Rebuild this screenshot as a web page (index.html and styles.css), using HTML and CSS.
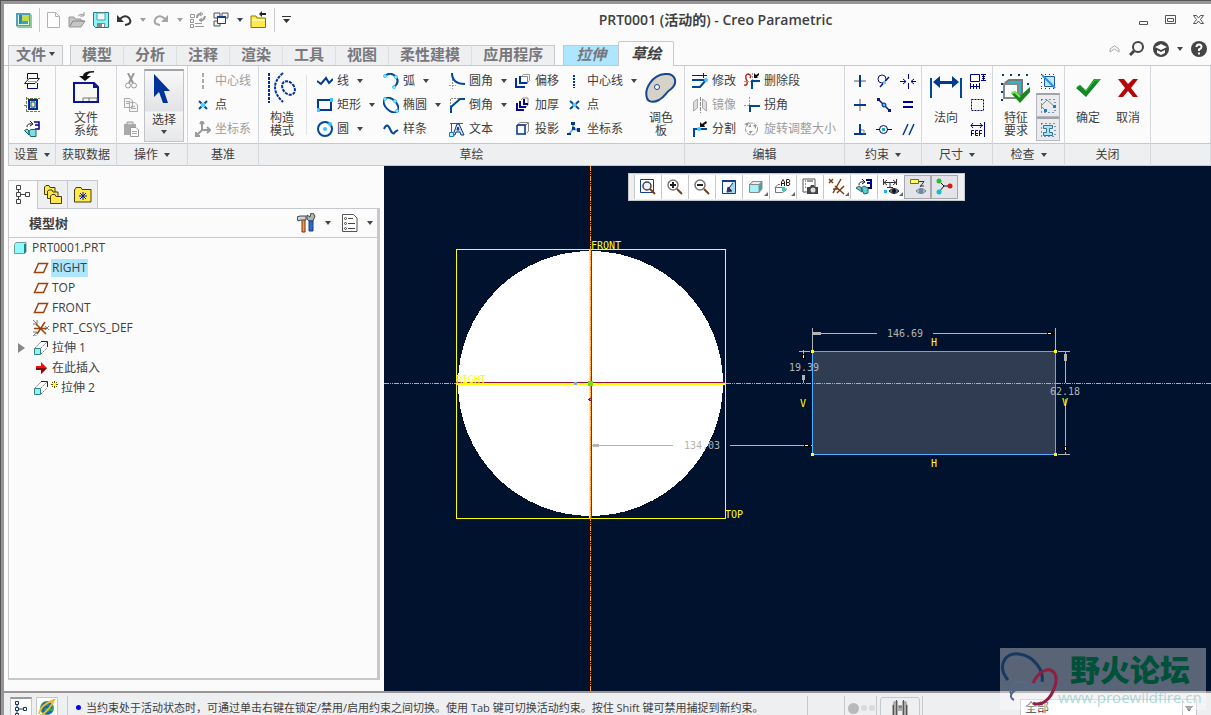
FILE: index.html
```html
<!DOCTYPE html>
<html lang="zh-CN">
<head>
  <meta charset="UTF-8">
  <meta name="viewport" content="width=device-width, initial-scale=1.0">
  <title>PRT0001 (活动的) - Creo Parametric</title>
  <link rel="stylesheet" href="styles.css">
</head>
<body>
<div class="window">

  <!-- Title bar -->
  <header class="titlebar">
    <div class="quick">
      <button class="qbtn" aria-label="Creo"><svg width="16" height="16" viewBox="0 0 16 16"><path d="M0 1H14L16 3V16H2L0 14Z" fill="#8cc8a0"/><path d="M0 1H14V14H0Z" fill="#4d9fc4"/><path d="M2 3H13V13H2Z" fill="#e8f4d0"/><path d="M3 3H8V12H3Z" fill="#2784bd"/><path d="M6 3H13V9H6Z" fill="#c3d94e"/><path d="M5 9H12V12H5Z" fill="#30a6ce"/></svg></button>
      <span class="qsep"></span>
      <button class="qbtn" aria-label="新建"><svg width="14" height="16" viewBox="0 0 14 16"><path d="M.5 .5H8.500L12.500 4.500V15.500H.5ZM8.500 .5V4.500H12.500" fill="#fff" stroke="#b2b2b2"/></svg></button>
      <button class="qbtn" aria-label="打开"><svg width="18" height="16" viewBox="0 0 18 16"><path d="M1 14V5H6L7 7H13V9H17L13 15H1Z" fill="#c5c5c5" stroke="#999"/><path d="M2 14L5 9H17" fill="none" stroke="#888"/><path d="M10 4Q12 1 16 3M16 0V4H12" fill="none" stroke="#999"/></svg></button>
      <button class="qbtn" aria-label="保存"><svg width="16" height="16" viewBox="0 0 16 16"><path d="M.5 .5H15.500V15.500H2.500L.5 13.500Z" fill="#8df4f4" stroke="#237b88"/><path d="M4 1H12V8H4Z" fill="#f5f5f5" stroke="#4aa3aa"/><path d="M4 11H12V15H4Z" fill="#888"/><path d="M9 12H11V15H9Z" fill="#fff"/></svg></button>
      <button class="qbtn" aria-label="撤消"><svg width="16" height="16" viewBox="0 0 16 16"><path d="M4 7Q9 2 13 6Q17 12 9 13" fill="none" stroke="#333" stroke-width="2"/><path d="M1 3V10H8Z" fill="#333"/></svg><i class="arrow dim"></i></button>
      <button class="qbtn" aria-label="重做"><svg width="16" height="16" viewBox="0 0 16 16"><path d="M12 7Q7 2 3 6Q-1 12 7 13" fill="none" stroke="#a5a5a5" stroke-width="2"/><path d="M15 3V10H8Z" fill="#a5a5a5"/></svg><i class="arrow dim"></i></button>
      <button class="qbtn" aria-label="重新生成"><svg width="16" height="16" viewBox="0 0 16 16" fill="none" stroke="#999"><path d="M.5 2.500H4.500V5.500H.5ZM.5 7.500H3.500V10.500H.5ZM.5 12.500H3.500V15.500H.5ZM5 14.500H14M5 11.500H12"/><path d="M7 6Q7 2 11 2M15 4Q14 9 10 8" stroke-width="2"/><path d="M10 0L13 2L10 4M12 6L9 8L12 10"/></svg></button>
      <button class="qbtn" aria-label="窗口"><svg width="16" height="16" viewBox="0 0 16 16"><path d="M1 1H7V6H1ZM9 1H15V6H9ZM1 9H7V14H1Z" fill="#eee" stroke="#555"/><path d="M4.500 4.500H12.500V11.500H4.500Z" fill="#fff" stroke="#123e91"/><path d="M4 4H13V6H4Z" fill="#123e91"/></svg><i class="arrow"></i></button>
      <button class="qbtn" aria-label="关闭"><svg width="17" height="18" viewBox="0 0 17 18"><path d="M1 5H6L7 7H15.500V16.500H1Z" fill="#ffea4d" stroke="#8b7700"/><path d="M2 8H15V10H2Z" fill="#fff9a3"/><path d="M9 3L12 0V2H16V4H12V6Z" fill="#222"/></svg></button>
      <span class="qsep"></span>
      <button class="qbtn" aria-label="自定义"><svg width="10" height="8" viewBox="0 0 10 8"><path d="M0 0H9V1H0ZM1 3H8L4.500 7Z" fill="#333"/></svg></button>
    </div>
    <h1 class="title">PRT0001 (活动的) - Creo Parametric</h1>
    <div class="winbtns">
      <button aria-label="最小化"><svg width="10" height="10" viewBox="0 0 10 10"><path d="M.5 6.500H8.500V9.500H.5Z" fill="none" stroke="#555"/></svg></button>
      <button aria-label="最大化"><svg width="12" height="10" viewBox="0 0 12 10"><path d="M.5 .5H10.500V8.500H.5ZM2.500 3.500H8.500V6.500H2.500Z" fill="none" stroke="#555"/></svg></button>
      <button aria-label="关闭窗口"><svg width="12" height="10" viewBox="0 0 12 10"><path d="M.5 .5H3.500L5.500 3L7.500 .5H10.500L7.500 4.500L10.500 8.500H7.500L5.500 6L3.500 8.500H.5L3.500 4.500Z" fill="none" stroke="#555"/></svg></button>
    </div>
  </header>

  <!-- Ribbon tabs -->
  <nav class="tabs">
    <button class="tab file">文件<i class="arrow"></i></button>
    <div class="tabset">
      <button class="tab">模型</button><button class="tab">分析</button><button class="tab">注释</button><button class="tab">渲染</button><button class="tab">工具</button><button class="tab">视图</button><button class="tab">柔性建模</button><button class="tab">应用程序</button>
    </div>
    <button class="tab context">拉伸</button>
    <button class="tab context active">草绘</button>
    <div class="help">
      <button aria-label="最小化功能区"><svg width="12" height="8" viewBox="0 0 12 8"><path d="M1 4L5.500 .7L10 4V7L5.500 4L1 7Z" fill="none" stroke="#aaa"/></svg></button>
      <button aria-label="搜索"><svg width="16" height="16" viewBox="0 0 16 16"><circle cx="9" cy="6" r="5" fill="#f4f8fc" stroke="#444" stroke-width="2"/><path d="M5 10L1 14" stroke="#444" stroke-width="3"/></svg></button>
      <button aria-label="学习"><svg width="16" height="16" viewBox="0 0 16 16"><circle cx="8" cy="8" r="8" fill="#444"/><path d="M2 6L8 3L14 6L8 9ZM4 9L8 11L12 9V12L8 14L4 12Z" fill="#fff"/></svg><i class="arrow"></i></button>
      <button aria-label="帮助"><svg width="16" height="16" viewBox="0 0 16 16"><circle cx="8" cy="8" r="8" fill="#444"/><path d="M5.500 6Q5.500 3.500 8 3.500T10.500 6Q10.500 7.500 8 8.500V10" fill="none" stroke="#fff" stroke-width="2"/><path d="M7 11.500H9V13.500H7Z" fill="#fff"/></svg></button>
    </div>
  </nav>

  <!-- Ribbon groups -->
  <div class="ribbon">
    <section class="group g-setup">
      <div class="tools">
        <div class="col">
          <button class="cmd" aria-label="草绘设置"><svg width="16" height="16" viewBox="0 0 16 16"><path d="M3.500 6V.5H13.500V6M13.500 10V15.500H3.500V10" fill="none" stroke="#00008b"/><path d="M.5 10.500L5 5.500H15.500L11 10.500Z" fill="#fff" stroke="#222"/><path d="M4 8.500H13" stroke="#aaa"/></svg></button>
          <button class="cmd" aria-label="参考"><svg width="16" height="16" viewBox="0 0 16 16"><path d="M4 2H14V13H4Z" fill="#003093"/><path d="M6 4H12V11H6Z" fill="#c6d3d0"/><path d="M7 5H11V10H7Z" fill="#dde9ca" stroke="#456"/><path d="M0 8.500H4M2.500 0V15M2 14.500H16M2 1.500H16" stroke="#777c45" stroke-dasharray="3 1"/></svg></button>
          <button class="cmd" aria-label="草绘视图"><svg width="16" height="16" viewBox="0 0 16 16"><path d="M10 1H15V8H11M11 4H15" fill="none" stroke="#00008b" stroke-width="1.500"/><path d="M3 6Q3 2 8 3M6 0L9 3L6 5" fill="none" stroke="#222"/><path d="M.5 9.500L3 8L5 10V14ZM4.500 10.500L7 8.500H12V15.500H6.500Z" fill="#7fe0dd" stroke="#176670"/></svg></button>
        </div>
      </div>
      <div class="glabel">设置 <i class="arrow"></i></div>
    </section>

    <section class="group g-data">
      <div class="tools center">
        <button class="big"><svg width="30" height="34" viewBox="0 0 30 34"><path d="M3 14H23L27 18V33H3Z" fill="#f7f7f4" stroke="#0a1595" stroke-width="2"/><path d="M23 14V18H27" fill="none" stroke="#0a1595" stroke-width="2"/><path d="M12 32V29H26V32M18 29V32" fill="none" stroke="#777"/><path d="M23 3.500Q17 3 16 7H20L14 12L8 7H12Q12 2 23 2Z" fill="#111"/></svg><span>文件<br>系统</span></button>
      </div>
      <div class="glabel">获取数据</div>
    </section>

    <section class="group g-ops">
      <div class="tools">
        <div class="col">
          <button class="cmd" aria-label="剪切"><svg width="16" height="16" viewBox="0 0 16 16" fill="none" stroke="#999"><path d="M5 0L10 10M11 0L6 10" stroke-width="2"/><circle cx="5" cy="12.500" r="2.500"/><circle cx="11" cy="12.500" r="2.500"/></svg></button>
          <button class="cmd" aria-label="复制"><svg width="16" height="16" viewBox="0 0 16 16" fill="#f6f6f6" stroke="#aaa"><path d="M1.500 1.500H7L9.500 4V10.500H1.500ZM6.500 5.500H12L14.500 8V14.500H6.500Z"/><path d="M3 4.500H7M3 6.500H6M8 9.500H12M8 11.500H13"/></svg></button>
          <button class="cmd" aria-label="粘贴"><svg width="16" height="16" viewBox="0 0 16 16"><path d="M1 3H13V14H1Z" fill="#aaa"/><path d="M4 1H10V4H4Z" fill="#ddd" stroke="#999"/><path d="M7.500 6.500H13L15.500 9V15.500H7.500Z" fill="#fff" stroke="#999"/><path d="M9 10.500H14M9 12.500H14" stroke="#aaa"/></svg></button>
        </div>
        <button class="big select-tool"><svg width="22" height="34" viewBox="0 0 22 34"><path d="M1 3V26L6 21L10 32H15L11 20H17Z" fill="#003399"/></svg><span>选择</span><i class="arrow"></i></button>
      </div>
      <div class="glabel">操作 <i class="arrow"></i></div>
    </section>

    <section class="group g-datum">
      <div class="tools">
        <div class="col">
          <button class="cmd off"><svg width="16" height="16" viewBox="0 0 16 16"><path d="M8 0V16" stroke="#aaa" stroke-width="2" stroke-dasharray="4 2"/></svg>中心线</button>
          <button class="cmd"><svg width="16" height="16" viewBox="0 0 16 16"><path d="M4 4L12 12M12 4L4 12" stroke="#084b91" stroke-width="2"/><path d="M6 6H10V10H6Z" fill="#4ecdff"/></svg>点</button>
          <button class="cmd off"><svg width="16" height="16" viewBox="0 0 16 16"><path d="M7 2V9L2 14M7 9H15M5 3L7 0L9 3M1 11V15H5M12 6L15 9L12 12" fill="none" stroke="#999" stroke-width="2"/></svg>坐标系</button>
        </div>
      </div>
      <div class="glabel">基准</div>
    </section>

    <section class="group g-sketch">
      <div class="tools">
        <button class="big construct"><svg width="28" height="34" viewBox="0 0 28 34"><g fill="none" stroke="#003399" stroke-width="2" stroke-dasharray="3 1"><path d="M1 4V34M15 4Q-1 18 15 33"/><ellipse cx="20.500" cy="19" rx="5.500" ry="7.500" transform="rotate(-40 20.500 19)"/></g></svg><span>构造<br>模式</span></button>
        <span class="vline"></span>
        <div class="col c1">
          <button class="cmd"><svg width="16" height="16" viewBox="0 0 16 16"><path d="M0 8L4 11L9 5L12 10L16 6" fill="none" stroke="#003b91" stroke-width="2"/></svg>线<i class="arrow"></i></button>
          <button class="cmd"><svg width="16" height="16" viewBox="0 0 16 16"><path d="M1 3H14V13H1Z" fill="none" stroke="#003b91" stroke-width="2"/><path d="M13 1H16V5H13ZM0 11H3V15H0Z" fill="#39c5ff"/></svg>矩形<i class="arrow"></i></button>
          <button class="cmd"><svg width="16" height="16" viewBox="0 0 16 16"><circle cx="8" cy="8" r="7" fill="none" stroke="#00489c" stroke-width="2"/><circle cx="8" cy="8" r="2" fill="#39c5ff"/><circle cx="13" cy="3" r="2" fill="#39c5ff"/></svg>圆<i class="arrow"></i></button>
        </div>
        <div class="col c1">
          <button class="cmd"><svg width="16" height="16" viewBox="0 0 16 16"><path d="M2 3Q8 -2 13 4Q17 9 11 14" fill="none" stroke="#00489c" stroke-width="2"/><g fill="#a6eaff" stroke="#39c5ff"><circle cx="2" cy="3" r="1.500"/><circle cx="13" cy="4" r="1.500"/><circle cx="11" cy="14" r="1.500"/></g></svg>弧<i class="arrow"></i></button>
          <button class="cmd"><svg width="16" height="16" viewBox="0 0 16 16"><ellipse cx="8" cy="8" rx="9" ry="5.500" transform="rotate(45 8 8)" fill="none" stroke="#00489c" stroke-width="2"/><g fill="#a6eaff" stroke="#39c5ff"><circle cx="2" cy="2" r="1.500"/><circle cx="12" cy="4" r="1.500"/><circle cx="14" cy="14" r="1.500"/></g></svg>椭圆<i class="arrow"></i></button>
          <button class="cmd"><svg width="16" height="16" viewBox="0 0 16 16"><path d="M1 8Q4 1 7 8T12 11L15 9" fill="none" stroke="#00489c" stroke-width="2"/></svg>样条</button>
        </div>
        <div class="col c1">
          <button class="cmd"><svg width="16" height="16" viewBox="0 0 16 16"><path d="M3.500 6V16M0 12.500H7" stroke="#999" stroke-dasharray="2 1"/><path d="M3 0Q3 11 16 11" fill="none" stroke="#00489c" stroke-width="2"/></svg>圆角<i class="arrow"></i></button>
          <button class="cmd"><svg width="16" height="16" viewBox="0 0 16 16"><path d="M1.500 10V1.500H10" fill="none" stroke="#888" stroke-dasharray="2 1"/><path d="M2 16V10L11 2H16" fill="none" stroke="#00489c" stroke-width="2"/></svg>倒角<i class="arrow"></i></button>
          <button class="cmd"><svg width="16" height="16" viewBox="0 0 16 16"><path d="M2.500 13V2.500H14M1 2.500H4" fill="none" stroke="#555"/><path d="M4 14L8 3H10L15 14H12L11 11H7L6 14ZM8 9H10L9 6Z" fill="#ddd" stroke="#003b91"/><path d="M.5 11.500H4.500V15.500H.5Z" fill="#bcecff" stroke="#1e75bc"/></svg>文本</button>
        </div>
        <div class="col c2">
          <button class="cmd"><svg width="16" height="16" viewBox="0 0 16 16"><path d="M6.500 3.500L8.500 1.500H14.500V7.500L12.500 9.500" fill="none" stroke="#999"/><path d="M5.500 3.500H12.500V10.500H5.500Z" fill="#fff" stroke="#888"/><path d="M1 5V14H10M5 3V10H12" fill="none" stroke="#003399" stroke-width="2"/></svg>偏移</button>
          <button class="cmd"><svg width="16" height="16" viewBox="0 0 16 16"><path d="M6 3L8 1H13V8L11 10" fill="none" stroke="#888"/><path d="M2 6V13H9M5 4V10H11M9 2V7H13" fill="none" stroke="#0a058d" stroke-width="2"/></svg>加厚</button>
          <button class="cmd"><svg width="16" height="16" viewBox="0 0 16 16"><path d="M3 3L5 1.500H13.500V10L12 12M3 4H11M11 4L13 2" fill="none" stroke="#888"/><path d="M2 4V13H11M2 4H10V13" fill="none" stroke="#003399" stroke-width="1.500"/></svg>投影</button>
        </div>
        <div class="col c3">
          <button class="cmd"><svg width="16" height="16" viewBox="0 0 16 16"><path d="M7 2V15" stroke="#003b91" stroke-width="2" stroke-dasharray="2 1"/></svg>中心线<i class="arrow"></i></button>
          <button class="cmd"><svg width="16" height="16" viewBox="0 0 16 16"><path d="M3 4L12 12M12 4L3 12" stroke="#084b91" stroke-width="2"/><path d="M6 6H9V10H6Z" fill="#4ecdff"/></svg>点</button>
          <button class="cmd"><svg width="16" height="16" viewBox="0 0 16 16"><path d="M6 2V8L2 13M6 8L13 9" fill="none" stroke="#69a9d6" stroke-width="2"/><path d="M4 1H8V4H4ZM0 12H4V14H0ZM5 6H8V9H5ZM10 7H13V11H10Z" fill="#003b91"/></svg>坐标系</button>
        </div>
        <button class="big palette"><svg width="32" height="34" viewBox="0 0 32 34"><path d="M2 29C-1 20 7 6 20 5C31 4 33 14 26 20C20 24 21 27 14 31C8 34 3 33 2 29Z" fill="#d5d3c8" stroke="#164592" stroke-width="2"/><circle cx="12" cy="18" r="2.500" fill="#fff" stroke="#164592"/></svg><span>调色<br>板</span></button>
      </div>
      <div class="glabel">草绘</div>
    </section>

    <section class="group g-edit">
      <div class="tools">
        <div class="col e1">
          <button class="cmd"><svg width="16" height="16" viewBox="0 0 16 16"><path d="M0 2.500H15M11.500 0V5" stroke="#222"/><path d="M0 7H11L14 7M0 14H8L14 7" fill="none" stroke="#00489c" stroke-width="2"/><circle cx="14" cy="7" r="2" fill="#39c5ff"/></svg>修改</button>
          <button class="cmd off"><svg width="16" height="16" viewBox="0 0 16 16"><path d="M1.500 14V5L5.500 2V11ZM14.500 14V5L10.500 2V11Z" fill="#ddd" stroke="#aaa"/><path d="M8.500 0V16" stroke="#888" stroke-dasharray="4 1"/></svg>镜像</button>
          <button class="cmd"><svg width="16" height="16" viewBox="0 0 16 16"><path d="M2 16V8H15" fill="none" stroke="#00489c" stroke-width="2"/><circle cx="7" cy="8" r="2" fill="#39c5ff"/><path d="M8 6V1L10 3L14 0L15 2L12 4L13 6Z" fill="#111"/></svg>分割</button>
        </div>
        <div class="col">
          <button class="cmd"><svg width="16" height="16" viewBox="0 0 16 16"><path d="M0 12Q4 13 3 8Q0 2 4 1Q8 2 6 5" fill="none" stroke="#aa3022" stroke-width="1.500"/><path d="M8 16V8H16" fill="none" stroke="#00489c" stroke-width="2"/><path d="M10 5V0L12 2L15 0V2L13 4L14 5Z" fill="#111"/><path d="M0 8.500H7M8.500 0V7" stroke="#999" stroke-dasharray="2 1"/></svg>删除段</button>
          <button class="cmd"><svg width="16" height="16" viewBox="0 0 16 16"><path d="M0 8.500H7M5.500 0V8" stroke="#999" stroke-dasharray="2 1"/><path d="M6 15V9H16" fill="none" stroke="#00489c" stroke-width="2"/></svg>拐角</button>
          <button class="cmd off"><svg width="16" height="16" viewBox="0 0 16 16"><circle cx="7.500" cy="8" r="6" fill="none" stroke="#999" stroke-dasharray="4 1"/><path d="M4 6H7V3ZM9 4H12V8ZM5 10H9L6 13Z" fill="#999"/><path d="M0 3L5 1L4 5" fill="#999"/></svg>旋转调整大小</button>
        </div>
      </div>
      <div class="glabel">编辑</div>
    </section>

    <section class="group g-constrain">
      <div class="tools grid3">
        <button class="cmd" aria-label="竖直"><svg width="16" height="16" viewBox="0 0 16 16"><path d="M2 8H14" stroke="#aaa" stroke-width="2"/><path d="M8 2V14" stroke="#003b91" stroke-width="2"/></svg></button>
        <button class="cmd" aria-label="相切"><svg width="16" height="16" viewBox="0 0 16 16"><circle cx="6" cy="6" r="4" fill="none" stroke="#0a168d"/><path d="M4 14L13 4" stroke="#0a168d" stroke-width="1.500"/><path d="M7 8H10V11H7Z" fill="#38e3f0"/></svg></button>
        <button class="cmd" aria-label="对称"><svg width="16" height="16" viewBox="0 0 16 16"><path d="M8.500 1V6M8.500 10V16M0 8.500H6M11 8.500H16M3 6L6 8.500L3 11M14 6L11 8.500L14 11" fill="none" stroke="#00008b"/></svg></button>
        <button class="cmd" aria-label="水平"><svg width="16" height="16" viewBox="0 0 16 16"><path d="M8 2V14" stroke="#aaa" stroke-width="2"/><path d="M2 8H14" stroke="#003b91" stroke-width="2"/></svg></button>
        <button class="cmd" aria-label="中点"><svg width="16" height="16" viewBox="0 0 16 16"><path d="M2 2L14 14" stroke="#0a168d" stroke-width="1.500"/><path d="M1 1H4V4H1ZM12 12H15V15H12Z" fill="#0a168d"/><circle cx="8" cy="8" r="2" fill="#37cff0" stroke="#0a168d"/></svg></button>
        <button class="cmd" aria-label="相等"><svg width="16" height="16" viewBox="0 0 16 16"><path d="M3 5H13M3 10H13" stroke="#00008b" stroke-width="2"/></svg></button>
        <button class="cmd" aria-label="垂直"><svg width="16" height="16" viewBox="0 0 16 16"><path d="M8 3V13M2 13H14" stroke="#003b91" stroke-width="2"/><path d="M9 9H12V13" fill="none" stroke="#888"/></svg></button>
        <button class="cmd" aria-label="重合"><svg width="16" height="16" viewBox="0 0 16 16"><path d="M0 8.500H4M11 8.500H16" stroke="#00008b"/><circle cx="7.500" cy="8.500" r="4" fill="none" stroke="#00008b"/><path d="M6 7H9V10H6Z" fill="#1eaab0"/></svg></button>
        <button class="cmd" aria-label="平行"><svg width="16" height="16" viewBox="0 0 16 16"><path d="M3 14L8 3M9 14L14 3" stroke="#003b91" stroke-width="1.500"/></svg></button>
      </div>
      <div class="glabel">约束 <i class="arrow"></i></div>
    </section>

    <section class="group g-dim">
      <div class="tools">
        <button class="big"><svg width="32" height="34" viewBox="0 0 32 34"><path d="M1 9V29M31 9V29" stroke="#00489c" stroke-width="2"/><path d="M3 13L10 7V12H22V7L29 13L22 19V15H10V19Z" fill="#003b91"/></svg><span>法向</span></button>
        <div class="col">
          <button class="cmd" aria-label="周长"><svg width="16" height="16" viewBox="0 0 16 16"><path d="M.5 1.500H9.500V8.500H.5ZM11 1.500H16M11 7.500H16M13.500 1V8M12 3.500H15M12 5.500H15M.5 10V16M9.500 10V16M1 13.500H9M3.500 11V16M6.500 11V16" fill="none" stroke="#00008b"/></svg></button>
          <button class="cmd" aria-label="基线"><svg width="16" height="16" viewBox="0 0 16 16"><path d="M1.500 2.500H13.500V13.500H1.500Z" fill="none" stroke="#00008b" stroke-dasharray="2 1"/></svg></button>
          <button class="cmd" aria-label="参考尺寸"><svg width="16" height="16" viewBox="0 0 16 16"><path d="M14.500 1V16M1 4.500H13M3 2L1 4.500L3 7M10 2L12 4.500L10 7M1.500 15V9.500H4M1 12.500H4M8 9.500H5.500V14.500H8M5 12.500H8M9.500 15V9.500H12M9 12.500H12" fill="none" stroke="#00008b"/></svg></button>
        </div>
      </div>
      <div class="glabel">尺寸 <i class="arrow"></i></div>
    </section>

    <section class="group g-inspect">
      <div class="tools">
        <button class="big"><svg width="30" height="34" viewBox="0 0 30 34"><path d="M1 6H29M1 14V32M27 14V18" fill="none" stroke="#003b91" stroke-width="2" stroke-dasharray="2 6"/><path d="M4 14L8 11H21V24L17 29" fill="#30b9be" stroke="#777" stroke-width="2"/><path d="M3 15H17V29H3Z" fill="#fafcfc" stroke="#888" stroke-width="2"/><path d="M10 24L14 22L19 27L29 18V23L19 34Z" fill="#16881d"/><path d="M11 24L14 23L19 28" fill="none" stroke="#7be850" stroke-width="2"/></svg><span>特征<br>要求</span></button>
        <div class="col toggles">
          <button class="cmd" aria-label="重叠几何"><svg width="16" height="16" viewBox="0 0 16 16"><path d="M4.500 3.500H14.500V13.500H4.500Z" fill="#bce7f8" stroke="#245aa4"/><path d="M1 1.500H15M1.500 1V15M1 15.500H15" fill="none" stroke="#003b91" stroke-dasharray="1 3"/><path d="M2 2L15 15" stroke="#278de8" stroke-width="2"/></svg></button>
          <button class="cmd on" aria-label="突出显示开放端"><svg width="16" height="16" viewBox="0 0 16 16"><path d="M1.500 1.500H15V14.500H1.500Z" fill="none" stroke="#003b91" stroke-dasharray="1 3"/><path d="M5 12L1 8L7 2L14 8" fill="none" stroke="#888"/><path d="M4 11H7V14H4ZM13 7H16V10H13Z" fill="#1b7ad2"/></svg></button>
          <button class="cmd on" aria-label="着色封闭环"><svg width="16" height="16" viewBox="0 0 16 16"><path d="M1.500 1.500H15V14.500H1.500Z" fill="none" stroke="#003b91" stroke-dasharray="1 3"/><path d="M3.500 3.500H12.500V6.500H9.500V10.500H12.500V13.500H3.500V10.500H6.500V6.500H3.500Z" fill="#a9e5f6" stroke="#307395"/></svg></button>
        </div>
      </div>
      <div class="glabel">检查 <i class="arrow"></i></div>
    </section>

    <section class="group g-close">
      <div class="tools center">
        <button class="big"><svg width="26" height="34" viewBox="0 0 26 34"><path d="M1 19L5 16L11 21L19 10H26L11 28Z" fill="#128724"/><path d="M2 18L5 16L11 22L20 11H25" fill="none" stroke="#36cf36"/></svg><span>确定</span></button>
        <button class="big"><svg width="24" height="34" viewBox="0 0 24 34"><path d="M2 10H8L12 15L17 10H22L15 19L22 28H17L12 22L7 28H2L9 19Z" fill="#b40808"/></svg><span>取消</span></button>
      </div>
      <div class="glabel">关闭</div>
    </section>
    <section class="group g-rest">
      <div class="tools"></div>
      <div class="glabel"></div>
    </section>
  </div>

  <main class="main">
    <!-- Model tree -->
    <aside class="side">
      <div class="sidetabs">
        <button class="sidetab active" aria-label="模型树"><svg width="16" height="20" viewBox="0 0 16 20"><path d="M1.500 .5H5.500V4.500H1.500ZM1.500 7.500H5.500V11.500H1.500ZM1.500 14.500H5.500V18.500H1.500ZM10.500 7.500H14.500V11.500H10.500ZM3.500 5V7M3.500 12V14M6 9.500H10" fill="none" stroke="#444"/></svg></button>
        <button class="sidetab" aria-label="文件夹浏览器"><svg width="18" height="20" viewBox="0 0 18 20" fill="#ffe84b" stroke="#443f17"><path d="M.5 9.500V2L2 .5H5L6 2.500H11V9.500Z"/><path d="M3.500 13.500V6L5 5H8L9 7H14V13.500Z"/><path d="M6.500 18.500V11L8 9.500H11L12 11.500H17.500V18.500Z"/></svg></button>
        <button class="sidetab" aria-label="收藏夹"><svg width="18" height="16" viewBox="0 0 18 16"><path d="M.5 15V3L2 .5H7L8 2.500H17V15Z" fill="#ffe94b" stroke="#443f17"/><path d="M9 5V13M5 9H13M6 6L12 12M12 6L6 12" stroke="#0018a5"/></svg></button>
      </div>
      <div class="panel">
        <div class="panelhead">
          <h2>模型树</h2>
          <button aria-label="设置"><svg width="19" height="20" viewBox="0 0 19 20"><path d="M5 6H8V19H5Z" fill="#e3a33b" stroke="#8a2a15"/><path d="M0 4L3 3H9V7H4L1 8Z" fill="#c8d4d6" stroke="#444"/><path d="M10 2L13 4L14 0H16L18 3L16 8H12L10 6Z" fill="#aab5b7" stroke="#444"/><path d="M12 8H16V18H12Z" fill="#276bd0" stroke="#223c73"/></svg><i class="arrow"></i></button>
          <button aria-label="显示"><svg width="17" height="20" viewBox="0 0 17 20"><path d="M1.500 1.500H12.500L16 5V18.500H1.500Z" fill="#fff" stroke="#555"/><path d="M7 5.500H12M7 10.500H14M7 15.500H14" stroke="#444"/><g fill="none" stroke="#444"><circle cx="4.500" cy="5.500" r="1"/><circle cx="4.500" cy="10.500" r="1"/><circle cx="4.500" cy="15.500" r="1"/></g></svg><i class="arrow"></i></button>
        </div>
        <ul class="tree">
          <li><svg width="16" height="16" viewBox="0 0 16 16"><path d="M1.500 4.500L3 2.500H13V12L10.500 13.500H1.500Z" fill="#8efaff" stroke="#6e9d9e"/><path d="M11 4H13V12L11 14Z" fill="#247f80"/></svg><span>PRT0001.PRT</span></li>
          <li class="sub"><svg width="16" height="16" viewBox="0 0 16 16"><path d="M1.500 12.500L5.500 3.500H14.500L10.500 12.500Z" fill="none" stroke="#99420c" stroke-width="1.500"/></svg><span class="sel">RIGHT</span></li>
          <li class="sub"><svg width="16" height="16" viewBox="0 0 16 16"><path d="M1.500 12.500L5.500 3.500H14.500L10.500 12.500Z" fill="none" stroke="#99420c" stroke-width="1.500"/></svg><span>TOP</span></li>
          <li class="sub"><svg width="16" height="16" viewBox="0 0 16 16"><path d="M1.500 12.500L5.500 3.500H14.500L10.500 12.500Z" fill="none" stroke="#99420c" stroke-width="1.500"/></svg><span>FRONT</span></li>
          <li class="sub"><svg width="16" height="16" viewBox="0 0 16 16"><path d="M1 8.500H14M3 4L13 14M12 2L4 14" fill="none" stroke="#99420c" stroke-width="1.500"/><path d="M0 0L4 4M4 0V4H0M0 12H4L0 16H4M12 6L16 10M16 6L12 10" fill="none" stroke="#777"/></svg><span>PRT_CSYS_DEF</span></li>
          <li class="sub node"><i class="twist"></i><svg width="16" height="16" viewBox="0 0 16 16"><path d="M1.500 8.500H7.500V14.500H1.500Z" fill="#86f6f9" stroke="#377e83"/><path d="M8 1.500H14.500V7" fill="none" stroke="#222"/><path d="M2 8L8 2M8 14L14 8M8 8L14 2" fill="none" stroke="#777" stroke-dasharray="2 1"/></svg><span>拉伸 1</span></li>
          <li class="sub"><svg width="16" height="16" viewBox="0 0 16 16"><path d="M3 6H8V2L14 8L8 14V10H3Z" fill="#f01010"/><path d="M3 8H14L8 14V10H3Z" fill="#850a0a"/></svg><span>在此插入</span></li>
          <li class="sub"><svg width="25" height="16" viewBox="0 0 25 16"><path d="M1.500 8.500H7.500V14.500H1.500Z" fill="#86f6f9" stroke="#377e83"/><path d="M8 1.500H14.500V7" fill="none" stroke="#222"/><path d="M2 8L8 2M8 14L14 8M8 8L14 2" fill="none" stroke="#777" stroke-dasharray="2 1"/><path d="M21.500 1V8M18 4.500H25M19 2L24 7M24 2L19 7" stroke="#5c5500"/><path d="M20 3H23V6H20Z" fill="#ff0"/></svg><span>拉伸 2</span></li>
        </ul>
      </div>
    </aside>

    <!-- Graphics area -->
    <div class="canvas">
      <svg class="drawing" width="100%" height="100%">
        <g fill="none" shape-rendering="crispEdges">
          <circle cx="206.500" cy="217.500" r="132.500" fill="#fff"/>
          <rect x="428.500" y="185.500" width="243" height="103" fill="#2f3c52" stroke="#4fb0ff"/>
          <rect x="72.500" y="83.500" width="269" height="269" stroke="#ffff00"/>
          <path d="M72 216.500H341M207.500 84V352" stroke="#99103d"/>
          <path d="M72 218H341M206 84V352" stroke="#ffff00" stroke-width="2"/>
          <path d="M206.500 0V3000" stroke="#ff9c12" stroke-dasharray="5 1 1 1 1 1"/>
          <path d="M0 217.500H72M342 217.500H4000" stroke="#e8a82d" stroke-dasharray="5 1 1 1 1 1"/>
          <!-- dimension lines -->
          <g stroke="#b4b4b4">
            <path d="M208 279.500H289M346 279.500H428M430 167.500H493M549 167.500H672M428.500 162V184M671.500 162V184"/>
            <path d="M415 185.500H426M674 185.500H686M674 288.500H686M419.500 184V191M419.500 211V217M681.500 186V217M681.500 233V288"/>
          </g>
          <path d="M209 279.500H215M429 167.500H437M681.500 188V195M419.500 209V214" stroke="#b4b4b4" stroke-width="3"/>
          <path d="M420 279.500H427M663 167.500H671M419.500 188V193M681.500 280V286" stroke="#000" stroke-width="3"/>
          <path d="M421 279.500H424M664 167.500H667M419.500 189V192M681.500 281V284" stroke="#fff"/>
          <path d="M427 184H430V187H427ZM670 184H673V187H670ZM427 287H430V290H427ZM670 287H673V290H670Z" fill="#ffff00"/>
          <path d="M204 215H209V220H204Z" fill="#68e21b"/>
          <path d="M190 216H193V219H190Z" fill="#72a9dd"/>
          <circle cx="206.500" cy="233.500" r="1.500" stroke="#99103d"/>
        </g>
        <g class="dims">
          <text x="503" y="171">146.69</text>
          <text x="300" y="283">134.03</text>
          <text x="405" y="205">19.39</text>
          <text x="666" y="229">62.18</text>
        </g>
        <g class="marks">
          <text x="207" y="83">FRONT</text>
          <text x="72" y="217">RIGHT</text>
          <text x="341" y="352">TOP</text>
          <text x="547" y="180">H</text>
          <text x="547" y="301">H</text>
          <text x="416" y="241">V</text>
          <text x="678" y="240">V</text>
        </g>
      </svg>
      <div class="viewbar">
        <button aria-label="重新调整"><svg width="18" height="18" viewBox="0 0 18 18"><path d="M1.500 1.500H14.500V14.500H1.500Z" fill="#fff" stroke="#123e91"/><circle cx="8" cy="8" r="4" fill="#eef" stroke="#444" stroke-width="1.500"/><path d="M11 11L16 16" stroke="#783d17" stroke-width="2"/></svg></button>
        <button aria-label="放大"><svg width="18" height="18" viewBox="0 0 18 18"><circle cx="7" cy="7" r="5" fill="#fff" stroke="#777" stroke-width="1.500"/><path d="M4 7H10M7 4V10" stroke="#222" stroke-width="2"/><path d="M11 11L16 16" stroke="#783d17" stroke-width="2"/></svg></button>
        <button aria-label="缩小"><svg width="18" height="18" viewBox="0 0 18 18"><circle cx="7" cy="7" r="5" fill="#fff" stroke="#777" stroke-width="1.500"/><path d="M4 7H10" stroke="#222" stroke-width="2"/><path d="M11 11L16 16" stroke="#783d17" stroke-width="2"/></svg></button>
        <button aria-label="重画"><svg width="18" height="18" viewBox="0 0 18 18"><path d="M2.500 2.500H15.500V15.500H2.500Z" fill="#a9d4ee" stroke="#123e91"/><path d="M2 2H16V4H2Z" fill="#123e91"/><path d="M3 4H12L6 15H3Z" fill="#fff"/><path d="M13 5L9 10M8 9L12 13L7 14Z" fill="#335" stroke="#123e91"/></svg></button>
        <button class="more" aria-label="显示样式"><svg width="18" height="18" viewBox="0 0 18 18"><path d="M2.500 6.500L6 3.500H15V11L12 14.500" fill="#40a6a5" stroke="#888"/><path d="M2.500 6.500L6 3.500H15L12 6.500Z" fill="#eee" stroke="#888"/><path d="M2.500 6.500H12V14.500H2.500Z" fill="#a2f4f7" stroke="#888"/></svg></button>
        <button class="more" aria-label="已命名视图"><svg width="18" height="18" viewBox="0 0 18 18"><path d="M1 9.500L4 6.500H6M1.500 9.500V14.500H8.500L12 12V10M1 9.500H8" fill="none" stroke="#777"/><path d="M8 9H11V13H8Z" fill="#40c6c5"/><path d="M7.500 8V4L9 1.500L10.500 4V8M7 5.500H11M12.500 1.500V7.500H15L16 6L15 4.500H13H15L16 3L15 1.500Z" fill="none" stroke="#222"/></svg></button>
        <button aria-label="视图管理器"><svg width="18" height="18" viewBox="0 0 18 18"><path d="M2 1H14V14H2Z" fill="#fff" stroke="#555"/><path d="M4 3H5M6 3H12M4 6H5M4 9H5" stroke="#333"/><path d="M6 9H9L10 7H13L14 9H17V16H6Z" fill="#444"/><circle cx="12" cy="12" r="2.500" fill="#ddd"/></svg></button>
        <button class="more" aria-label="基准显示过滤器"><svg width="18" height="18" viewBox="0 0 18 18" stroke="#803e14" fill="none" stroke-width="1.500"><path d="M1 1L5 5M5 1L1 5M13 1L5 15M7 8L16 16M16 8L9 15M5 11H10"/></svg></button>
        <button aria-label="草绘视图"><svg width="18" height="18" viewBox="0 0 18 18"><path d="M11 2H16V10H11M12 5H16" fill="none" stroke="#00008b" stroke-width="2"/><path d="M4 7Q4 3 9 4M7 1L10 4L7 6" fill="none" stroke="#222"/><path d="M1 10L4 8L7 10V14ZM6 10L9 8L13 10V15L9 16Z" fill="#59cfd2" stroke="#315d60"/></svg></button>
        <button class="more" aria-label="草绘器显示过滤器"><svg width="18" height="18" viewBox="0 0 18 18"><path d="M1.500 1V7M14.500 1V7M2 4.500H14M5 2L2 4.500L5 7M11 2L14 4.500L11 7M8 5V9M5 9.500H11" fill="none" stroke="#333"/><path d="M2 12H5V15H2Z" fill="#1ba8ff"/><path d="M7 13Q12 8 17 13Q12 18 7 13" fill="#5c8287" stroke="#222"/><circle cx="12" cy="13" r="2" fill="#111"/></svg></button>
        <button class="on" aria-label="注释显示"><svg width="18" height="18" viewBox="0 0 18 18"><path d="M1.500 1.500H9.500V5.500H1.500Z" fill="#fffc6b" stroke="#766c0c"/><path d="M10 3.500H15L11 9M11 8H15" fill="none" stroke="#333"/><path d="M7 13Q12 8 17 13Q12 18 7 13" fill="#ced7d9" stroke="#687b81"/><circle cx="12" cy="13" r="2.500" fill="#6a8bb0"/></svg></button>
        <button class="on" aria-label="旋转中心"><svg width="18" height="18" viewBox="0 0 18 18"><path d="M3 3L8 8L3 14M8 8H15" fill="none" stroke="#111"/><circle cx="3" cy="3" r="2.500" fill="#25bf32"/><circle cx="14" cy="8" r="2.500" fill="#d71818"/><circle cx="3" cy="14" r="2.500" fill="#11bfc9"/></svg></button>
      </div>
    </div>
  </main>

  <!-- Status bar -->
  <footer class="status">
    <div class="statusrow">
      <button class="sbtn on" aria-label="模型树"><svg width="14" height="16" viewBox="0 0 14 16"><path d="M1.500 .5H4.500V3.500H1.500ZM1.500 6.500H4.500V9.500H1.500ZM1.500 12.500H4.500V15.500H1.500ZM9.500 6.500H12.500V9.500H9.500ZM3 4V6M3 10V12M5 8H9" fill="none" stroke="#173767"/></svg></button>
      <button class="sbtn" aria-label="浏览器"><svg width="18" height="18" viewBox="0 0 18 18"><circle cx="9" cy="9" r="7" fill="#30a556"/><path d="M5 8H13Q13 4 9 4T5 9T9 14Q12 14 13 12" fill="none" stroke="#1765bb" stroke-width="2.500"/><path d="M1 15Q2 6 16 1Q12 11 2 17" fill="none" stroke="#f0b92d" stroke-width="2"/></svg></button>
      <span class="ssep"></span>
      <p class="msg">当约束处于活动状态时，可通过单击右键在锁定/禁用/启用约束之间切换。使用 Tab 键可切换活动约束。按住 Shift 键可禁用捕捉到新约束。</p>
      <div class="sright">
        <span class="cell"></span>
        <span class="cell lamps"><i></i><i></i><i></i></span>
        <span class="cell finder"><button class="sbtn find" aria-label="查找"><svg width="18" height="18" viewBox="0 0 18 18"><path d="M3 2H7V16H1V7ZM11 2H15L17 7V16H11ZM7 6H11V12H7Z" fill="#aaa"/><path d="M5.500 1V16M12.500 1V16M2.500 6V16M15.500 6V16M8 8H11" stroke="#555"/></svg></button></span>
        <select class="filter" aria-label="过滤器"><option>全部</option></select>
      </div>
    </div>
  </footer>

  <div class="watermark">
    <svg width="58" height="58" viewBox="0 0 58 58" fill="none"><path d="M8 32C-3 19 4 4 19 6C34 8 44 22 42 34" stroke="#17385f" stroke-width="3"/><path d="M42 34C34 42 20 36 13 44C10 47 10 50 14 52M29 36C18 30 8 37 11 46" stroke="#54698a" stroke-width="2"/><path d="M44 23C51 19 59 25 55 38C51 51 42 59 33 55M44 23C40 24 36 29 33 35" stroke="#902041" stroke-width="3"/></svg>
    <div class="wmtext"><strong>野火论坛</strong><span>www.proewildfire.cn</span></div>
  </div>
</div>
</body>
</html>
```
FILE: styles.css
```css
/* Base */
* {
  box-sizing: border-box;
}

body, html {
  margin: 0;
  padding: 0;
  height: 100%;
  overflow: hidden;
}

body {
  border-top: 1px solid #555;
  border-left: 1px solid #555;
  font-family: "Open Sans", "Noto Sans CJK SC", sans-serif;
  font-size: 12px;
  line-height: 16px;
  color: #404040;
  background: #fbfbfb;
}

button {
  font: inherit;
  color: inherit;
  background: none;
  border: 0;
  padding: 0;
  margin: 0;
  display: flex;
  align-items: center;
}

svg {
  display: block;
  flex: none;
}

.window {
  height: 100%;
  display: flex;
  flex-direction: column;
  border-top: 3px solid #999495;
  border-left: 3px solid #999495;
  position: relative;
}

.arrow {
  flex: none;
  display: inline-block;
  border: 3px solid transparent;
  border-top: 4px solid #444;
  border-bottom: 0;
}

.arrow.dim {
  border-top-color: #a0a0a0;
}

/* Title bar */
.titlebar {
  height: 36px;
  flex: none;
  display: grid;
  grid-template-columns: auto 1fr auto;
  align-items: center;
  padding: 0 6px 4px 12px;
}

.quick {
  display: flex;
  align-items: center;
  gap: 7px;
}

.qbtn {
  gap: 8px;
}

.qsep {
  width: 1px;
  height: 24px;
  background: #c5c9ce;
}

.title {
  margin: 0;
  text-align: center;
  font-size: 14px;
  font-weight: 600;
  line-height: 20px;
}

.winbtns {
  display: flex;
  justify-content: flex-end;
  gap: 16px;
}

/* Ribbon tabs */
.tabs {
  flex: none;
  height: 26px;
  padding-left: 4px;
  display: flex;
  align-items: flex-end;
  border-bottom: 1px solid #c5c9ce;
}

.tab {
  height: 20px;
  padding: 0 11px 3px;
  background: #eeeff1;
  border: 1px solid #c5c9ce;
  border-width: 1px 1px 0 0;
  font-family: "Noto Sans CJK SC", sans-serif;
  font-size: 15px;
  line-height: 16px;
  font-weight: bold;
  color: #77777c;
}

.tab.file {
  padding: 0 7px 3px;
  border-left-width: 1px;
  margin-right: 8px;
  gap: 3px;
}

.tabset {
  display: flex;
  margin-right: 8px;
}

.tabset .tab {
  border-right-color: #dcdfe2;
}

.tabset .tab:first-child {
  box-shadow: -1px 0 #c5c9ce;
}

.tabset .tab:last-child {
  border-right-color: #c5c9ce;
}

.tab.context {
  background: #aee5ff;
  border-left-width: 1px;
  padding: 0 12px 3px;
  font-style: italic;
}

.tab.context.active {
  height: 25px;
  margin-bottom: -1px;
  margin-left: -1px;
  background: #fbfbfb;
  color: #404040;
  border-radius: 2px 2px 0 0;
}

.help {
  flex: 1;
  align-self: center;
  display: flex;
  justify-content: flex-end;
  align-items: center;
  gap: 8px;
  padding: 0 4px 8px 0;
}

.help button {
  gap: 8px;
}

/* Ribbon groups */
.ribbon {
  flex: none;
  height: 100px;
  margin-left: 4px;
  display: flex;
  border-left: 1px solid #c5c9ce;
}

.group {
  flex: none;
  display: flex;
  flex-direction: column;
  border-right: 1px solid #d5d8dc;
}

.tools {
  height: 77px;
  padding-top: 3px;
  display: flex;
  white-space: nowrap;
}

.tools.center {
  justify-content: center;
  gap: 15px;
}

.glabel {
  height: 23px;
  display: flex;
  align-items: center;
  justify-content: center;
  gap: 6px;
  border-top: 1px solid #c5c9ce;
  border-bottom: 1px solid #c5c9ce;
  background: #eeeff1;
}

.col {
  display: flex;
  flex-direction: column;
}

.cmd {
  height: 24px;
  gap: 4px;
}

.cmd .arrow {
  margin-left: 4px;
}

.off {
  color: #9d9d9d;
}

.big {
  flex-direction: column;
  height: 73px;
  gap: 4px;
  line-height: 13px;
}

.big span {
  padding-top: 4px;
}

.g-setup { width: 47px; }
.g-data { width: 61px; }
.g-ops { width: 71px; }
.g-datum { width: 71px; }
.g-sketch { width: 426px; }
.g-edit { width: 160px; }
.g-constrain { width: 77px; }
.g-dim { width: 71px; }
.g-inspect { width: 72px; }
.g-close { width: 86px; }
.g-rest { flex: 1; }

.g-setup .tools { padding-left: 15px; }
.g-ops .tools { padding-left: 6px; gap: 5px; }
.g-datum .tools { padding-left: 7px; }
.g-datum .cmd { gap: 4px; }
.g-sketch .tools { padding-left: 8px; }
.g-edit .tools { padding-left: 7px; }
.g-dim .tools { padding-left: 8px; gap: 8px; }
.g-inspect .tools { padding-left: 8px; gap: 5px; }

.select-tool {
  width: 40px;
  border: 1px solid #c0c3c8;
  border-top: 2px solid #a0a3a8;
  background: linear-gradient(#f8f8f8, #e2e3e6 40px, #f6f6f7 41px, #e6e7e9);
}

.vline {
  width: 1px;
  height: 60px;
  margin: 6px 10px 0 9px;
  background: #e2e3e5;
}

.construct { width: 30px; }
.palette { width: 32px; margin-left: 2px; }
.c1 { width: 66px; }
.c2 { width: 52px; }
.c3 { width: 76px; }
.e1 { width: 52px; }

.grid3 {
  display: grid;
  grid-template-columns: repeat(3, 24px);
  grid-auto-rows: 24px;
  padding-left: 3px;
  justify-items: center;
}

.toggles .cmd {
  width: 24px;
  justify-content: center;
}

.toggles .on {
  border: 1px solid #b5b9bf;
  border-top: 2px solid #a0a3a8;
  background: #e9ebee;
}

/* Main area */
.main {
  flex: 1;
  min-height: 0;
  display: flex;
}

.side {
  width: 380px;
  flex: none;
  padding: 14px 4px 11px;
  display: flex;
  flex-direction: column;
}

.sidetabs {
  display: flex;
  height: 28px;
}

.sidetab {
  width: 30px;
  justify-content: center;
  background: #eeeff1;
  border: 1px solid #c5c9ce;
  border-width: 1px 1px 0 0;
}

.sidetab.active {
  background: #fbfbfb;
  border-left-width: 1px;
  margin-bottom: -1px;
  z-index: 1;
}

.panel {
  flex: 1;
  border: 1px solid #c5c9ce;
  border-right-width: 3px;
  border-bottom-width: 2px;
}

.panelhead {
  height: 29px;
  display: flex;
  align-items: center;
  gap: 10px;
  padding: 0 4px 0 20px;
  border-bottom: 1px solid #c5c9ce;
}

.panelhead h2 {
  margin: 0;
  flex: 1;
  font-size: 13px;
  font-weight: bold;
}

.panelhead button {
  gap: 9px;
}

.tree {
  list-style: none;
  margin: 0;
  padding: 0 4px;
}

.tree li {
  height: 20px;
  display: flex;
  align-items: center;
  gap: 2px;
}

.tree span {
  line-height: 18px;
  padding: 0 1px;
}

.tree .sub {
  padding-left: 20px;
}

.tree .node {
  padding-left: 5px;
}

.twist {
  width: 13px;
  height: 10px;
  border: 5px solid transparent;
  border-left: 7px solid #888;
  border-right: 0;
}

.sel {
  background: #aee5ff;
}

/* Graphics area */
.canvas {
  flex: 1;
  min-width: 0;
  position: relative;
  background: #00122e;
  display: flex;
  justify-content: center;
  align-items: flex-start;
  padding: 7px 2px 0 0;
  overflow: hidden;
}

.drawing {
  position: absolute;
  left: 0;
  top: 0;
}

.dims, .marks {
  font-family: "DejaVu Sans Mono", monospace;
  font-size: 10px;
  fill: #b4b4b4;
}

.marks {
  fill: #ffff00;
}

.viewbar {
  position: relative;
  display: flex;
  height: 28px;
  padding: 1px 6px 1px 5px;
  background: #eeeff1;
  border: 1px solid #c5c9ce;
}

.viewbar button {
  width: 27px;
  justify-content: center;
  background: #fff;
  border-left: 1px solid #c5c9ce;
  position: relative;
}

.viewbar .on {
  background: #e2e4e8;
  border: 1px solid #a5a9af;
}

.viewbar .more::after {
  content: "";
  position: absolute;
  right: 1px;
  bottom: 3px;
  border: 2px solid #666;
  border-top-color: transparent;
  border-left-color: transparent;
}

/* Status bar */
.status {
  flex: none;
  height: 24px;
  overflow: hidden;
  border-top: 2px solid #999495;
  background: #eeeff1;
}

.statusrow {
  height: 30px;
  display: flex;
  align-items: center;
  padding: 0 14px 0 6px;
}

.sbtn {
  flex: none;
  width: 22px;
  height: 22px;
  margin-right: 4px;
  justify-content: center;
  background: #fff;
  border: 1px solid #c5c9ce;
}

.sbtn.on {
  border-top: 2px solid #999;
}

.ssep {
  flex: none;
  width: 1px;
  height: 24px;
  margin: 0 8px 0 5px;
  background: #c5c9ce;
}

.msg {
  margin: 0;
  flex: 1;
  font-size: 11px;
  white-space: nowrap;
}

.msg::before {
  content: "";
  display: inline-block;
  width: 5px;
  height: 5px;
  margin: 0 5px 2px 0;
  border-radius: 50%;
  background: #0000ff;
}

.sright {
  flex: none;
  display: flex;
  align-items: center;
}

.cell {
  height: 24px;
  width: 37px;
  border-left: 1px solid #c5c9ce;
  display: flex;
  align-items: center;
}

.lamps {
  width: 32px;
  gap: 2px;
  padding-left: 3px;
}

.lamps i {
  width: 6px;
  height: 6px;
  border-radius: 50%;
  background: #d9dadc;
}

.lamps i:first-child {
  width: 11px;
  height: 11px;
  background: #b9babc;
}

.finder {
  width: 47px;
  padding-left: 3px;
  border-right: 1px solid #c5c9ce;
}

.find {
  width: 40px;
  margin: 0;
  border-radius: 3px;
  background: #eeeff1;
}

.filter {
  width: 177px;
  height: 18px;
  margin-left: 97px;
  padding: 0 4px;
  font: inherit;
  color: inherit;
  border: 1px solid #c5c9ce;
  border-radius: 0;
  appearance: none;
  background:
    conic-gradient(from -35deg at 50% 100%, #777 70deg, transparent 0) right 3px top 6px / 8px 6px no-repeat,
    linear-gradient(#c5c9ce, #c5c9ce) right 13px top 0 / 1px 18px no-repeat,
    #fff;
}

/* Site mark over the lower right corner */
.watermark {
  position: absolute;
  right: 5px;
  bottom: 5px;
  width: 206px;
  height: 62px;
  display: flex;
  background: rgba(255, 255, 255, 0.35);
  pointer-events: none;
}

.wmtext {
  display: flex;
  flex-direction: column;
}

.wmtext strong {
  padding-left: 12px;
  font-family: "Noto Sans CJK SC", sans-serif;
  font-size: 30px;
  font-weight: 900;
  line-height: 40px;
  color: #00503a;
}

.wmtext span {
  font-size: 15px;
  line-height: 18px;
  color: rgba(120, 195, 190, 0.6);
}
```
